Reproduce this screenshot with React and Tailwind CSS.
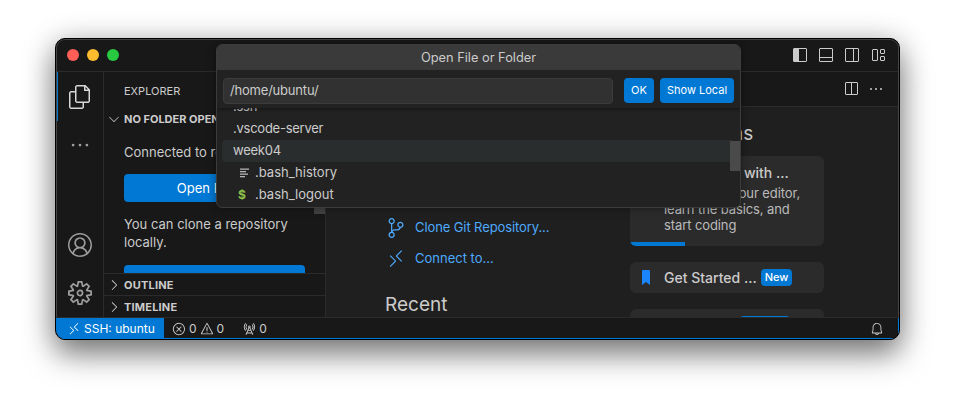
import React from "react";
import {
  VscFiles,
  VscEllipsis,
  VscAccount,
  VscSettingsGear,
  VscRemote,
  VscError,
  VscWarning,
  VscRadioTower,
  VscBell,
  VscChevronDown,
  VscChevronRight,
  VscSourceControl,
  VscSplitHorizontal,
  VscLayoutSidebarLeft,
  VscLayoutPanelOff,
  VscLayoutSidebarRightOff,
  VscLayout,
} from "react-icons/vsc";

const LinesIcon = () => (
  <svg width="10" height="10" viewBox="0 0 10 10" fill="#b4b4b4">
    <rect x="0" y="0.5" width="9" height="1.3" />
    <rect x="0" y="3" width="6" height="1.3" />
    <rect x="0" y="5.5" width="8" height="1.3" />
    <rect x="0" y="8" width="5" height="1.3" />
  </svg>
);

const ActivityBar = () => (
  <div className="w-12 shrink-0 flex flex-col items-center border-r border-[#2b2b2b] bg-[#181818] text-[#9d9d9d]">
    <div className="w-full h-[49px] flex items-center justify-center border-l-2 border-[#0078d4] text-[#d7d7d7] pr-0.5">
      <VscFiles size={24} />
    </div>
    <div className="h-12 flex items-center justify-center">
      <VscEllipsis size={22} />
    </div>
    <div className="mt-auto h-12 flex items-center justify-center">
      <VscAccount size={24} />
    </div>
    <div className="h-12 flex items-center justify-center">
      <VscSettingsGear size={24} />
    </div>
  </div>
);

const Collapsed = ({ label }) => (
  <div className="h-[22px] shrink-0 flex items-center border-t border-[#2b2b2b] text-[#cccccc] bg-[#181818]">
    <VscChevronRight size={16} className="mx-0.5" />
    <span className="text-[11px] font-bold tracking-[0.2px] pt-[2px]">{label}</span>
  </div>
);

const SideBar = () => (
  <div className="w-[222px] shrink-0 flex flex-col bg-[#181818] border-r border-[#2b2b2b] text-[#cccccc] relative">
    <div className="h-9 shrink-0 flex items-center pl-5 pt-[2px] text-[11px] text-[#cccccc]">EXPLORER</div>
    <div className="h-[22px] shrink-0 flex items-center">
      <VscChevronDown size={16} className="mx-0.5 text-[#aaaaaa]" />
      <span className="text-[11px] font-bold whitespace-nowrap">NO FOLDER OPENED</span>
    </div>
    <div className="flex-1 overflow-hidden pl-5 pr-5 pt-[13px] text-[13px] leading-[18px]">
      <p className="whitespace-nowrap">Connected to remote.</p>
      <div className="mt-[13px] h-7 rounded-sm bg-[#0078d4] text-white flex items-center justify-center">Open Folder</div>
      <p className="mt-[13px]">You can clone a repository locally.</p>
      <div className="mt-[14px] h-7 rounded-sm bg-[#0078d4]"></div>
    </div>
    <Collapsed label="OUTLINE" />
    <Collapsed label="TIMELINE" />
    <div className="absolute right-0 top-[135px] w-[11px] h-[7px] bg-[#424242]"></div>
  </div>
);

const Editor = () => (
  <div className="flex-1 min-w-0 flex flex-col bg-[#1f1f1f]">
    <div className="h-[35px] shrink-0 flex items-center justify-end bg-[#181818] border-b border-[#2b2b2b] text-[#cccccc] pr-[15px] gap-[9px]">
      <VscSplitHorizontal size={16} />
      <VscEllipsis size={16} />
    </div>
    <div className="flex-1 overflow-hidden flex pl-[59px]">
      <div className="w-[245px] shrink-0 pt-[105px]">
        <div className="flex items-center h-[31px] text-[13px] tracking-[-0.1px] text-[#4daafc]">
          <VscSourceControl size={20} className="mr-[9px] ml-[1px]" />
          Clone Git Repository...
        </div>
        <div className="flex items-center h-[31px] text-[13px] text-[#4daafc]">
          <VscRemote size={20} className="mr-[9px] ml-[1px]" />
          Connect to...
        </div>
        <h2 className="mt-[17px] text-[19px] leading-7 text-[#cccccc]">Recent</h2>
      </div>
      <div className="w-[194px] shrink-0 pt-[15px]">
        <h2 className="text-[19px] leading-6 text-[#cccccc]">Walkthroughs</h2>
        <div className="mt-[10px] h-[90px] rounded-md bg-[#2b2b2b] overflow-hidden flex flex-col">
          <div className="flex-1 pl-[34px] pr-2 pt-[5px]">
            <p className="text-[14px] leading-6 font-medium text-[#cccccc] whitespace-nowrap">Get Started with ...</p>
            <p className="text-[13px] leading-4 tracking-[-0.1px] text-[#bbbbbb]">Customize your editor, learn the basics, and start coding</p>
          </div>
          <div className="h-1 shrink-0 w-[55px] bg-[#0078d4]"></div>
        </div>
        <div className="mt-4 h-[31px] rounded-md bg-[#2b2b2b] flex items-center">
          <svg width="8" height="15" viewBox="0 0 8 15" fill="#1a85ff" className="ml-3 mr-[14px]">
            <path d="M0 1a1 1 0 0 1 1-1h6a1 1 0 0 1 1 1v14l-4-3-4 3z" />
          </svg>
          <span className="text-[14px] font-medium text-[#cccccc]">Get Started ...</span>
          <span className="ml-1 px-[4px] h-[17px] rounded bg-[#0078d4] text-white text-[11px] leading-[17px] font-medium">New</span>
        </div>
        <div className="mt-4 h-[31px] rounded-md bg-[#2b2b2b] relative">
          <div className="absolute left-[110px] top-[7px] w-[50px] h-[16px] rounded bg-[#0078d4]"></div>
        </div>
      </div>
    </div>
  </div>
);

const StatusBar = () => (
  <div className="h-[22px] shrink-0 flex items-stretch bg-[#181818] border-t border-[#2b2b2b] text-[12px] text-[#cccccc] relative">
    <div className="w-[108px] flex items-center bg-[#0078d4] text-white pl-[11px] gap-[3px]">
      <VscRemote size={14} />
      <span className="whitespace-nowrap">SSH: ubuntu</span>
    </div>
    <div className="flex items-center pl-[8px] gap-[3px]">
      <VscError size={14} />
      <span>0</span>
      <VscWarning size={14} />
      <span>0</span>
      <VscRadioTower size={14} className="ml-[15px]" />
      <span>0</span>
    </div>
    <div className="ml-auto flex items-center pr-[15px]">
      <VscBell size={14} />
    </div>
    <div className="absolute left-0 right-0 bottom-0 h-px bg-[#0078d4]"></div>
    <div className="absolute right-0 top-0 bottom-0 w-px bg-[#0078d4]"></div>
  </div>
);

const QuickInput = () => (
  <div className="absolute left-[160px] top-[5px] w-[525px] h-[164px] rounded-md bg-[#222222] border border-[#3c3c3c] overflow-hidden shadow-[0_0_8px_rgba(0,0,0,0.4)] flex flex-col text-[#cccccc] text-[13px]">
    <div className="h-[25px] shrink-0 flex items-center justify-center bg-[#3a3a3a] text-[#cccccc] text-[12.8px]">Open File or Folder</div>
    <div className="h-[38px] shrink-0 flex items-start pt-2 pl-[6px] pr-[6px] gap-[11px] shadow-[0_2px_3px_rgba(0,0,0,0.3)] z-10 bg-[#222222]">
      <div className="w-[390px] h-[26px] rounded-sm bg-[#313131] border border-[#3c3c3c] flex items-center pl-[6px] tracking-[-0.2px] text-[#cccccc]">/home/ubuntu/</div>
      <div className="w-[30px] h-[25px] rounded-sm bg-[#0078d4] text-white text-[11px] flex items-center justify-center">OK</div>
      <div className="-ml-[5px] w-[74px] h-[25px] rounded-sm bg-[#0078d4] text-white text-[11px] flex items-center justify-center whitespace-nowrap">Show Local</div>
    </div>
    <div className="flex-1 min-h-0 overflow-hidden relative px-[5px]">
      <div className="-mt-3">
        <div className="h-[22px] flex items-center pl-[11px] tracking-[-0.25px]">.ssh</div>
        <div className="h-[22px] flex items-center pl-[11px] tracking-[-0.25px]">.vscode-server</div>
        <div className="h-[22px] flex items-center pl-[11px] tracking-[-0.25px] rounded-sm bg-[#2a2d2e]">week04</div>
        <div className="h-[22px] flex items-center pl-[18px] gap-[5px]">
          <LinesIcon />
          <span>.bash_history</span>
        </div>
        <div className="h-[22px] flex items-center pl-[16px]">
          <span className="w-[17px] text-[12px] font-bold text-[#8dc149]">$</span>
          <span>.bash_logout</span>
        </div>
      </div>
      <div className="absolute right-0 top-[33px] w-[10px] h-[30px] bg-[#4a4a4a]"></div>
    </div>
  </div>
);

export default function App() {
  return (
    <div className="w-[955px] h-[413px] bg-white pt-[38px] pl-[55px] font-['Inter','Noto_Sans',sans-serif]">
      <div className="relative w-[845px] h-[302px] rounded-[10px] bg-[#181818] border border-black overflow-hidden shadow-[0_14px_30px_rgba(0,0,0,0.5),0_0_30px_rgba(0,0,0,0.15)] flex flex-col">
        <div className="h-[33px] shrink-0 flex items-center border-b border-[#2b2b2b] pl-[11px] pr-[13px]">
          <div className="flex gap-2">
            <span className="w-3 h-3 rounded-full bg-[#ff5f57]"></span>
            <span className="w-3 h-3 rounded-full bg-[#febc2e]"></span>
            <span className="w-3 h-3 rounded-full bg-[#28c840]"></span>
          </div>
          <div className="ml-auto flex gap-[10px] text-[#cccccc]">
            <VscLayoutSidebarLeft size={16} />
            <VscLayoutPanelOff size={16} />
            <VscLayoutSidebarRightOff size={16} />
            <VscLayout size={16} />
          </div>
        </div>
        <div className="flex-1 min-h-0 flex">
          <ActivityBar />
          <SideBar />
          <Editor />
        </div>
        <StatusBar />
        <QuickInput />
        <div className="absolute inset-x-0 top-0 bottom-[22px] rounded-t-[9px] border-t border-x border-[#454545] pointer-events-none"></div>
      </div>
    </div>
  );
}
